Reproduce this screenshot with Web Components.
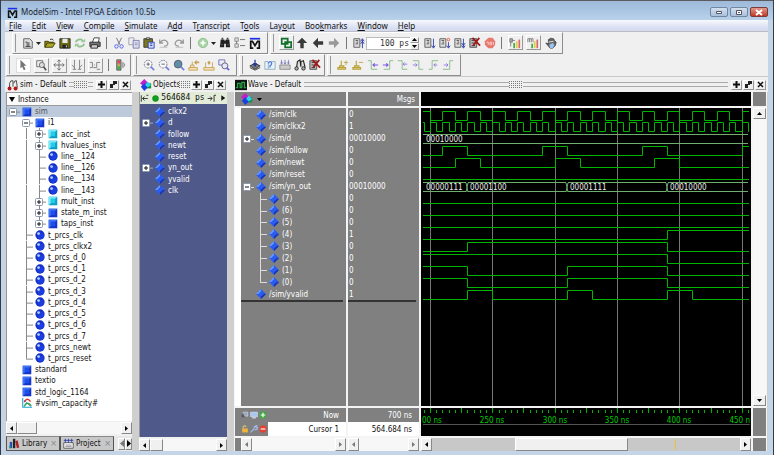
<!DOCTYPE html>
<html lang="en">
<head>
<meta charset="utf-8">
<title>ModelSim - Intel FPGA Edition 10.5b</title>
<style>
  html, body { margin: 0; height: 100%; }
  body { font: 8px/11px "DejaVu Sans Condensed", "DejaVu Sans", sans-serif; color: #111; background: #24303c; overflow: hidden; }
</style>
</head>
<body>
<app-window></app-window>

<script>
const ICONS = {
  logo: '<path d="M1 1h12v2H1z" fill="#1b2fe0"/><path d="M2 13V5h2l3 5 3-5h2v8M1 13h4M9 13h4" fill="none" stroke="#111" stroke-width="2"/>',
  doc: '<path d="M2 2h7l3 3v8H2z" fill="#ddd" stroke="#555"/><path d="M4 6h2v5M8 6v5M4 11h6" fill="none" stroke="#333"/>',
  open: '<path d="M1 12V5h4l1 1h5v2" fill="#8a8a18" stroke="#333300"/><path d="M1 12l3-5h9l-3 5z" fill="#b0a828" stroke="#333300"/><path d="M7 3q3-2 4 1" fill="none" stroke="#222"/>',
  save: '<path d="M1 2h12v11H1z" fill="#6e6e14" stroke="#222"/><path d="M4 2h6v5H4z" fill="#e8e8e8"/><path d="M4 9h6v4H4z" fill="#222"/><path d="M8 10h1v2H8z" fill="#fff"/>',
  refresh: '<path d="M2 6q2-4 7-3l1 2M12 8q-2 4-7 3l-1-2" fill="none" stroke="#8fc08f" stroke-width="2"/><path d="M8 6h5V2zM6 8H1v4z" fill="#9ccc9c"/>',
  print: '<path d="M4 6l2-5h6l-1 5" fill="#fff" stroke="#333"/><path d="M1 6h12v5H1z" fill="#777" stroke="#222"/><path d="M3 9h7v4H2z" fill="#ccc" stroke="#222"/>',
  cut: '<path d="M4 1l4 8M10 1L6 9" stroke="#667" fill="none"/><circle cx="4" cy="11" r="2" fill="none" stroke="#4455ee"/><circle cx="10" cy="11" r="2" fill="none" stroke="#4455ee"/>',
  copy: '<path d="M1 1h6v8H1z" fill="#eee" stroke="#99a"/><path d="M6 4h7v9H6z" fill="#dde" stroke="#77a"/><path d="M8 7h3M8 9h3" stroke="#88b"/>',
  paste: '<path d="M1 2h10v10H1z" fill="#7b7722" stroke="#333"/><path d="M4 1h4v2H4z" fill="#ddd" stroke="#333"/><path d="M6 6h7v7H6z" fill="#dde6ff" stroke="#2233aa"/><path d="M8 8h3M8 10h3" stroke="#2233aa"/>',
  undo: '<path d="M2 3v4h4M2 7q5-6 9-1 2 4-4 5" fill="none" stroke="#999" stroke-width="1.5"/><path d="M2 12h9" stroke="#bbb"/>',
  redo: '<path d="M12 3v4H8M12 7Q7 1 3 6q-2 4 4 5" fill="none" stroke="#999" stroke-width="1.5"/><path d="M3 12h9" stroke="#bbb"/>',
  plus: '<circle cx="7" cy="7" r="5.5" fill="#a9d3a4" stroke="#8fbf8c"/><path d="M7 4v6M4 7h6" stroke="#fff" stroke-width="2"/>',
  find: '<path d="M2 3h4l1 2 1-2h4l1 9H8V8H6v4H1z" fill="#222"/><path d="M3 1h2v2H3zM9 1h2v2H9z" fill="#444"/><path d="M3 9h1M10 9h1" stroke="#aaa"/>',
  list: '<path d="M1 1h4v4H1zM1 8h4v4H1z" fill="#ddd" stroke="#888"/><path d="M7 3h6M7 10h6M3 5v3" stroke="#666"/>',
  chip: '<path d="M2 2h7v6H2zM6 6h7v6H6z" fill="none" stroke="#13702a" stroke-width="2"/>',
  up: '<path d="M7 1l6 6H9v6H5V7H1z" fill="#3a3a3a"/>',
  left: '<path d="M1 7l6-6v4h6v4H7v4z" fill="#3a3a3a"/>',
  right: '<path d="M13 7L7 1v4H1v4h6v4z" fill="#999"/>',
  restart: '<path d="M1 2h7v10H1z" fill="#ddd" stroke="#555"/><path d="M3 4h3M4 6h2M3 8h3" stroke="#444"/><path d="M11 13V3M9 5l2-3 2 3M9 8l2-3 2 3" fill="none" stroke="#2233aa"/>',
  run: '<path d="M1 2h7v10H1z" fill="#ddd" stroke="#555"/><path d="M3 4h3M4 6h2M3 8h3" stroke="#444"/><path d="M11 2v10M9 10l2 3 2-3" fill="none" stroke="#2233aa"/>',
  runc: '<path d="M1 2h7v10H1z" fill="#ddd" stroke="#555"/><path d="M3 4h3M4 6h2M3 8h3" stroke="#444"/><path d="M11 6v6M9 10l2 3 2-3" fill="none" stroke="#2233aa"/><circle cx="11" cy="3" r="1.5" fill="none" stroke="#e44"/>',
  runall: '<path d="M1 2h7v10H1z" fill="#ddd" stroke="#555"/><path d="M3 4h3M4 6h2M3 8h3" stroke="#444"/><path d="M11 2v10M9 7l2 3 2-3M9 10l2 3 2-3" fill="none" stroke="#2233aa"/>',
  brk: '<path d="M1 2h8v10H1z" fill="#bbb" stroke="#444"/><path d="M3 4h4M3 7h4M3 10h4" stroke="#333"/><path d="M4 1l9 9M12 1L5 10" stroke="#a01515" stroke-width="2"/>',
  stop: '<path d="M5 1h5l3 4v4l-3 4H5L1 9V5z" fill="#e8786e"/><path d="M3 6h2v3M7 6v3h2V6zM11 6v3" fill="none" stroke="#fbd7d3"/>',
  perf: '<path d="M1 2h3v4H1zM4 4h3M2 6v5" fill="#aaa" stroke="#777"/><path d="M5 7h2v6H5z" fill="#4a4"/><path d="M8 5h2v8H8z" fill="#d9ce4a"/><path d="M11 3h2v10h-2z" fill="#d66"/>',
  mem: '<path d="M1 6V2h2v4M3 2h2v4M5 2h2v4" fill="none" stroke="#777"/><path d="M5 8h2v5H5z" fill="#4a4"/><path d="M8 5h2v8H8z" fill="#d9ce4a"/><path d="M11 3h2v10h-2z" fill="#d66"/>',
  hand: '<path d="M1 7l3 1V3l2-1 1-1 1 1 2 0 1 2 2 2-1 4-3 3H6z" fill="#666" stroke="#444"/><path d="M5 9l4-2 2 2-2 4H6z" fill="#9bc4f6"/><path d="M4 6l6-1" stroke="#eee"/>',
  pointer: '<path d="M4 1v10l2-2 2 4 2-1-2-4h3z" fill="#777"/>',
  zoombox: '<path d="M2 2h7v7H2z" fill="none" stroke="#666"/><circle cx="8" cy="7" r="3" fill="#ddd" stroke="#666"/><path d="M10 9l3 4" stroke="#555" stroke-width="2"/>',
  pan: '<path d="M7 1v12M1 7h12M5 3l2-2 2 2M5 11l2 2 2-2M3 5L1 7l2 2M11 5l2 2-2 2" fill="none" stroke="#666"/>',
  cursors: '<path d="M4 1v11M10 1v11M2 12h4M8 12h4M1 7l3 3M13 7l-3 3" fill="none" stroke="#777"/>',
  edit: '<path d="M1 4h3v6H1M5 10h4V4h4M6 7h1M9 12h4" fill="none" stroke="#777"/>',
  traffic: '<path d="M2 1h5v12H2z" fill="#999" stroke="#555"/><path d="M3 2h3v3H3z" fill="#e44"/><path d="M3 6h3v2H3z" fill="#ca4"/><path d="M3 9h3v3H3z" fill="#3b3"/><path d="M9 4q5 3 0 6z" fill="#ccc" stroke="#888"/>',
  zin: '<circle cx="6" cy="6" r="4.5" fill="#f6f9fc" stroke="#667" stroke-dasharray="2 1"/><path d="M4 6h4M6 4v4" stroke="#555"/><path d="M9 9l4 4" stroke="#7780dd" stroke-width="2"/>',
  zout: '<circle cx="6" cy="6" r="4.5" fill="#f6f9fc" stroke="#667" stroke-dasharray="2 1"/><path d="M4 6h4" stroke="#555"/><path d="M9 9l4 4" stroke="#7780dd" stroke-width="2"/>',
  zfull: '<circle cx="6" cy="6" r="4.5" fill="#5f8fa8" stroke="#556"/><path d="M9 9l4 4" stroke="#7780dd" stroke-width="2"/>',
  zcur: '<path d="M1 10h10v3H1zM3 10V7h4v3M5 7V3" fill="#f0e2bb" stroke="#c9a04e"/><path d="M7 4l3-3v2h3v2h-3v2z" fill="#c9a04e"/>',
  zrange: '<path d="M1 10h12v3H1zM3 10V4M11 10V4" fill="#f0e2bb" stroke="#c9a04e"/><path d="M5 4l2-2 2 2-2 3z" fill="#c9a04e"/>',
  zother: '<path d="M1 1h7v6H1z" fill="#eef" stroke="#66a"/><circle cx="8" cy="8" r="3.5" fill="#e5e9ff" stroke="#556"/><path d="M10 10l3 3" stroke="#66d" stroke-width="2"/>',
  compile: '<path d="M1 8l6-3 6 3-6 4z" fill="#777" stroke="#333"/><path d="M1 10l6 3 6-3" fill="none" stroke="#333"/><path d="M7 1v6M5 5l2 3 2-3" fill="none" stroke="#223a99" stroke-width="1.5"/>',
  outdate: '<path d="M1 3h4v9H1zM9 3h4v9H5" fill="#eaf2fa" stroke="#8ab"/><path d="M5 5q3-4 4 0 0 2-2 3v2" fill="none" stroke="#47d" stroke-width="1.5"/>',
  compileall: '<path d="M1 7h12v5H1z" fill="#ccc" stroke="#888"/><path d="M3 1v5M7 1v5M11 1v5M2 4l1 2 1-2M6 4l1 2 1-2M10 4l1 2 1-2" fill="none" stroke="#77b"/>',
  sim: '<path d="M3 10L4 3l3-2 1 8M8 9L8 3l3-1 2 8" fill="#ddd" stroke="#222" stroke-width="1.3"/><circle cx="3" cy="11" r="2" fill="#aaa" stroke="#222"/><circle cx="11" cy="11" r="2" fill="#aaa" stroke="#222"/>',
  simred: '<path d="M3 10V5q1-4 4-3v7M8 5q1-4 3-3l1 8" fill="#eee" stroke="#333"/><circle cx="3" cy="11" r="2.3" fill="#b01818"/><circle cx="10" cy="11" r="2.3" fill="#b01818"/>',
  curadd: '<path d="M1 10h9v2H1zM3 10V8h5v2M5 8V2" fill="#e9dc9a" stroke="#bba23c" stroke-width="1.3"/><path d="M8 4h5M10.5 2v5" stroke="#bba23c"/>',
  curdel: '<path d="M1 10h9v2H1zM3 10V8h5v2M5 8V2" fill="#e9dc9a" stroke="#bba23c" stroke-width="1.3"/><path d="M8 4h5" stroke="#bba23c"/>',
  eprev: '<path d="M1 2h4v10h7" fill="none" stroke="#7fb87f"/><path d="M7 7h6M9 5L7 7l2 2" fill="none" stroke="#7a55dd" stroke-width="1.3"/>',
  enext: '<path d="M2 12h7V2h4" fill="none" stroke="#7fb87f"/><path d="M1 7h6M5 5l2 2-2 2" fill="none" stroke="#7a55dd" stroke-width="1.3"/>',
  fprev: '<path d="M1 2h5v10h6" fill="none" stroke="#7fb87f"/><path d="M7 6h5M9 4L7 6l2 2" fill="none" stroke="#8a70dd"/>',
  fnext: '<path d="M1 2h7v10h5" fill="none" stroke="#7fb87f"/><path d="M1 7h5M4 5l2 2-2 2" fill="none" stroke="#8a70dd"/>',
  rprev: '<path d="M2 12h4V2h7" fill="none" stroke="#7fb87f"/><path d="M8 7h4M10 5L8 7l2 2" fill="none" stroke="#8a70dd"/>',
  rnext: '<path d="M1 12h8V2h4" fill="none" stroke="#7fb87f"/><path d="M2 7h5M5 5l2 2-2 2" fill="none" stroke="#8a70dd"/>',
  objects: '<path d="M5 0l4 4-4 5-5-4z" fill="#c020c8"/><path d="M8 5h5v6H8z" fill="#12903a"/><path d="M5 5l5 4-5 5-4-5z" fill="#1b3fe0"/><path d="M9 3l4 4-4 3-3-3z" fill="#27d7e6"/>',
  wave: '<path d="M0 1h14v12H0z" fill="#111"/><path d="M1 10h2V5h3v5h2V4h3v6h2" fill="none" stroke="#27a545" stroke-width="1.5"/>',
  square: '<path d="M1 1h12v12H1z" fill="#1536c8"/><path d="M1 1h12l-3 3H4v6l-3 3z" fill="#3f74f5"/><path d="M4 4h6v6H4z" fill="#1e4df0"/>',
  cyan: '<path d="M1 1h12v12H1z" fill="#0f9fc6"/><path d="M1 1h12l-3 3H4v6l-3 3z" fill="#7aeaf8"/><path d="M4 4h6v6H4z" fill="#22cdea"/>',
  ball: '<circle cx="7" cy="7" r="6.5" fill="#1230c4"/><circle cx="8" cy="8" r="4.5" fill="#1a3ee0"/><circle cx="5" cy="5" r="2" fill="#b9ccff"/>',
  diamond: '<path d="M7 0l7 7-7 7-7-7z" fill="#2a5cf0"/><path d="M7 0v3L3 7H0z" fill="#6a9cff"/><path d="M14 7l-7 7v-3l4-4z" fill="#1a32a8"/>',
  cap: '<path d="M1 0v13h13" fill="none" stroke="#18a4d8" stroke-width="1.5"/><path d="M3 6q4-8 9-1" fill="none" stroke="#e03a2a" stroke-width="2"/><path d="M3 3l9 9" stroke="#3a62e0"/><path d="M3 12q4-9 10-1" fill="none" stroke="#27a545" stroke-width="2"/>',
  library: '<path d="M1 5h3v8H1z" fill="#2a4ab8"/><path d="M5 1h3v12H5z" fill="#222"/><path d="M8 4l3-1 2 9-3 1z" fill="#b02222"/><path d="M0 10h2v3H0z" fill="#2a8"/>',
  project: '<path d="M1 6h12v7H1z" fill="#fff" stroke="#444"/><path d="M3 1v5M7 1v5M11 1v5M1 3h12" stroke="#2233aa"/><path d="M3 9h8M3 11h8" stroke="#777"/>',
  goleft: '<path d="M2 2v10M4 7h8M7 4L4 7l3 3M10 2h3" fill="none" stroke="#333" stroke-width="1.5"/>',
  goright: '<path d="M1 7h7M5 4l3 3-3 3M11 12V2h3" fill="none" stroke="#333" stroke-width="1.5"/>',
  play: '<path d="M4 2l7 5-7 5z" fill="#111"/>',
  dot: '<circle cx="7" cy="7" r="6" fill="#0fa01c" stroke="#0a6e12"/>',
  car: '<path d="M1 6h8v5H1z" fill="#556"/><path d="M3 2h9v7H6" fill="#9ab" stroke="#dde"/>',
  screen: '<path d="M1 2h12v8H1z" fill="#a9c6f2" stroke="#dfe9f8"/><path d="M4 12h6" stroke="#dfe9f8" stroke-width="2"/>',
  add: '<circle cx="7" cy="7" r="6.5" fill="#45a845"/><path d="M7 3v8M3 7h8" stroke="#fff" stroke-width="2"/>',
  lock: '<path d="M4 6V3q3-3 5 0" fill="none" stroke="#d6c17a" stroke-width="2"/><path d="M2 6h10v7H2z" fill="#f0b437"/>',
  wrench: '<path d="M1 13l6-6M7 7q-1-5 5-6l-2 3 2 1 2-1q0 5-6 4" fill="none" stroke="#9dbbe8" stroke-width="2"/>',
  remove: '<circle cx="7" cy="7" r="6.5" fill="#dd4536"/><path d="M3 7h8" stroke="#fff" stroke-width="2"/>'
};
const icon = (name, size = 13) => `<svg class="ico" width="${size}" height="${size}" viewBox="0 0 14 14" aria-hidden="true">${ICONS[name]}</svg>`;

const define = (tag, css, render) => customElements.define(tag, class extends HTMLElement {
  connectedCallback() {
    if (this.shadowRoot) return;
    const root = this.attachShadow({ mode: 'open' });
    root.innerHTML = `<style>*{box-sizing:border-box}:host{box-sizing:border-box}button{font:inherit;color:inherit;margin:0;padding:0;border:0;background:none;display:flex;align-items:center;justify-content:center}svg{display:block;flex:none}${css}</style>` + render(this);
  }
});
const attr = (el, n, d = '') => el.getAttribute(n) ?? d;

define('title-bar', `
  :host{display:flex;align-items:center;gap:3px;height:20px;padding:3px 1px 0 2px;background:linear-gradient(#9fbad8,#a9c4e2 45%,#b9d1ea);font:8px/12px "Noto Sans",sans-serif;color:#1a2430;border-top:1px solid #5d5a60}
  h1{font:inherit;margin:0;flex:1;white-space:nowrap}
  .wb{display:flex;gap:2px}
  .wb button{width:18px;height:10px;border:1px solid #7186a0;border-radius:2px;background:linear-gradient(#d3e0ef,#a9c0da)}
  .wb button:last-child{background:linear-gradient(#e09a8c,#c03a26);border-color:#7c3a38}`,
  () => `${icon('logo', 11)}<h1>ModelSim - Intel FPGA Edition 10.5b</h1><div class="wb">
  <button aria-label="Minimize"><svg width="8" height="6"><path d="M1.5 2.5h5v2h-5z" fill="#fff" stroke="#556"/></svg></button>
  <button aria-label="Maximize"><svg width="8" height="7"><path d="M1.5 1.5h5v4h-5z" fill="#fff" stroke="#556"/><path d="M3 3h2v1H3z" fill="#556"/></svg></button>
  <button aria-label="Close"><svg width="8" height="7"><path d="M1 1l6 5M7 1L1 6" stroke="#fff" stroke-width="2"/></svg></button></div>`);

define('menu-bar', `
  :host{display:block;background:linear-gradient(#f8f9fd,#dde3f3 60%,#d3daee);border-bottom:1px solid #bcbcc4;font:8px/12px "Noto Sans","DejaVu Sans",sans-serif}
  nav{display:flex;gap:10px;padding:0 4px;height:11px}
  a{color:inherit;text-decoration:none;white-space:nowrap}`,
  () => `<nav>${['_File', '_Edit', '_View', '_Compile', '_Simulate', 'A_dd', 'T_ranscript', 'T_ools', 'Lay_out', 'Boo_kmarks', '_Window', '_Help']
    .map(t => `<a href="#">${t.replace(/_(.)/, '<u>$1</u>')}</a>`).join('')}</nav>`);

define('tool-bar', `
  :host{display:flex;align-items:center;height:22px;padding:0 5px 0 7px;border-right:1px solid #8d8d8d;border-bottom:1px solid #8d8d8d;border-left:1px solid #fff;border-top:1px solid #fff;background:linear-gradient(#9a9a9a,#9a9a9a) 2px 1px/1px 18px no-repeat,#f0f0f0}`,
  () => '<slot></slot>');

define('tool-button', `
  :host{display:block;flex:none;width:var(--w,15px)}
  button{width:100%;height:16px}
  :host([raised]) button{width:15px;height:15px;margin:auto;border:1px solid;border-color:#fff #999 #999 #fff}
  :host([pressed]) button{width:15px;height:15px;margin:auto;background:#fff;border:1px solid #ddd}`,
  el => `<button aria-label="${attr(el, 'icon')}">${icon(attr(el, 'icon'), 12)}</button>`);

define('tool-sep', `:host{display:block;flex:none;width:9px;height:12px;background:linear-gradient(#777,#777) 4px 0/1px 100% no-repeat}`, () => '');
define('tool-caret', `:host{display:block;flex:none;width:7px}button{width:7px;height:14px}`,
  () => '<button aria-label="More"><svg width="5" height="3"><path d="M0 0h5L2.5 3z" fill="#222"/></svg></button>');

define('time-field', `
  :host{display:flex;flex:none;width:56px;height:13px;padding-right:3px}
  input{width:42px;min-width:0;flex:1;border:1px solid #bbb;border-right:0;background:#fff;font:8px/11px "DejaVu Sans Mono",monospace;color:#333;text-align:right;padding:0 1px}
  .sp{display:flex;flex-direction:column;width:9px}
  .sp button{flex:1;background:#eee;border:1px solid;border-color:#fff #999 #999 #fff}`,
  () => `<input aria-label="Run length" value="100 ps"><span class="sp"><button aria-label="Increase"><svg width="5" height="3"><path d="M0 3h5L2.5 0z"/></svg></button><button aria-label="Decrease"><svg width="5" height="3"><path d="M0 0h5L2.5 3z"/></svg></button></span>`);

define('dock-pane', `
  :host{display:flex;flex-direction:column;min-width:0;min-height:0;background:#f0f0f0}
  header{display:flex;align-items:center;height:15px;padding:0 1px;flex:none}
  h2{font:inherit;margin:0 3px 0 1px;white-space:nowrap}
  .grip{flex:1;height:5px;border:solid #aaa;border-width:1px 0;display:flex;justify-content:center;margin-right:3px;min-width:0}
  .dots{flex:none;width:var(--dots,14px);height:7px;margin-top:-2px;background:repeating-linear-gradient(90deg,transparent 0 1px,#f0f0f0 1px 2px),repeating-linear-gradient(#777 0 1px,#f0f0f0 1px 2px)}
  .b{display:flex;gap:1px}
  .b button{width:11px;height:10px;border:1px solid;border-color:#fff #999 #999 #fff}
  section{flex:1;display:flex;flex-direction:column;min-height:0}`,
  el => `<header>${icon(attr(el, 'icon'), 12)}<h2>${attr(el, 'label')}</h2><span class="grip"><span class="dots"></span></span>
  <span class="b"><button aria-label="Add"><svg width="7" height="7"><path d="M3.5 0v7M0 3.5h7" stroke="#111" stroke-width="2"/></svg></button>
  <button aria-label="Undock"><svg width="7" height="7"><path d="M0 3h3v4H0zM3 0h4v3H5v1H3z" fill="#222"/></svg></button>
  <button aria-label="Close"><svg width="7" height="7"><path d="M1 1l5 5M6 1L1 6" stroke="#111" stroke-width="1.5"/></svg></button></span></header>
  <section><slot></slot></section>`);

define('scroll-bar', `
  :host{display:flex;flex:none;height:12px;background:var(--track,#f7f7f7)}
  :host([vertical]){flex-direction:column;width:11px;height:auto}
  button{flex:none;width:11px;height:100%;background:#f0f0f0;border:1px solid;border-color:#fff #888 #888 #fff}
  :host([vertical]) button{width:100%;height:11px}
  .track{flex:1;position:relative;min-width:0}
  .thumb{height:100%;margin-left:var(--from,0%);width:var(--size,20px);background:#f0f0f0;border:1px solid;border-color:#fff #888 #888 #fff}
  :host([nothumb]) .thumb{display:none}
  path{fill:var(--arrow,#000)}
  .mark{position:absolute;left:var(--mark);top:1px;bottom:1px;width:1px;background:#e8c33a}`,
  el => {
    const v = el.hasAttribute('vertical');
    const p = v ? ['M0 4h5L2.5 1z', 'M0 1h5L2.5 4z'] : ['M4 0v5L1 2.5z', 'M1 0v5l3-2.5z'];
    return `<button aria-label="Back"><svg width="5" height="5"><path d="${p[0]}"/></svg></button><div class="track"><div class="thumb"></div>${el.hasAttribute('mark') ? '<div class="mark"></div>' : ''}</div><button aria-label="Forward"><svg width="5" height="5"><path d="${p[1]}"/></svg></button>`;
  });

// guides: one letter per 13px cell. space: blank, v: vertical line, t: tee, l: elbow,
// + and -: toggle with a line to its icon, p and q: "+" toggle on a tee or an elbow
define('tree-row', `
  :host{display:flex;align-items:center;min-height:0;white-space:nowrap;overflow:hidden}
  :host([selected]){background:#bccadb;color:#555}
  .cell{width:13px;height:100%}
  .slot{flex:none;width:13px;height:100%;display:flex;align-items:center;justify-content:center}
  span{padding-left:2px;line-height:11px}`,
  el => {
    const c = 'var(--line,#888)';
    const cells = [...attr(el, 'guides')].map(g => {
      let s = '';
      if ('vtp'.includes(g)) s += `<rect x="6" y="0" width="1" height="100%" fill="${c}"/>`;
      if ('lq'.includes(g)) s += `<rect x="6" y="0" width="1" height="50%" fill="${c}"/>`;
      if ('tlpq+-'.includes(g)) s += `<rect x="6" y="50%" width="7" height="1" fill="${c}"/>`;
      if ('pq+-'.includes(g)) s += `<svg y="1" width="13" height="10"><rect x="2.5" y="1.5" width="7" height="7" rx="1" fill="#fff" stroke="#8899b0"/><path d="M4 5h4${'pq+'.includes(g) ? 'M6 3v4' : ''}" stroke="#111"/></svg>`;
      return `<svg class="cell">${s}</svg>`;
    }).join('');
    return `${cells}<div class="slot">${icon(attr(el, 'icon'), 10)}</div><span>${attr(el, 'label')}</span>`;
  });

const row = ([guides, ic, label, sel]) => `<tree-row guides="${guides}" icon="${ic}" label="${label}"${sel ? ' selected' : ''}></tree-row>`;

define('instance-tree', `
  :host{display:flex;flex-direction:column;flex:1;min-height:0}
  .head{display:flex;align-items:center;gap:3px;height:14px;padding-left:2px;background:#fafafa;border:1px solid #999;border-width:1px 0 1px 1px}
  .body{flex:1;background:#fff;border-left:1px solid #999;min-height:0}
  .rows{display:grid;grid-auto-rows:1fr;height:303px}
  .tabs{display:flex;height:15px;align-items:center;background:#e8e8e8}
  .tab{display:flex;align-items:center;gap:2px;height:15px;width:54px;flex:none;padding:0 2px;background:#c8c8c8;border:1px solid #555;border-top-color:#888;white-space:nowrap}
  .tab b{font-weight:normal;color:#888;margin-left:auto;font-size:9px}
  .ar{display:flex;margin-left:auto}
  .ar button{width:7px;height:12px;border:1px solid;border-color:#fff #888 #888 #fff}
  scroll-bar{--size:20px;margin:1px 0 2px}`,
  () => `<div class="head"><svg width="6" height="5"><path d="M0 0h6L3 5z"/></svg>Instance</div><div class="body"><div class="rows">${[
    ['-', 'square', 'sim', 1], [' -', 'square', 'i1'],
    [' vp', 'cyan', 'acc_inst'], [' vp', 'cyan', 'hvalues_inst'],
    ...['124', '126', '134', '143'].map(n => [' vt', 'ball', 'line__' + n]),
    [' vp', 'cyan', 'mult_inst'], [' vp', 'square', 'state_m_inst'], [' vq', 'square', 'taps_inst'],
    ...['clk', 'clkx2', 'd_0', 'd_1', 'd_2', 'd_3', 'd_4', 'd_5', 'd_6', 'd_7', 'newt'].map(n => [' t', 'ball', 't_prcs_' + n]),
    [' l', 'ball', 't_prcs_reset'],
    [' ', 'square', 'standard'], [' ', 'square', 'textio'], [' ', 'square', 'std_logic_1164'], [' ', 'cap', '#vsim_capacity#']
  ].map(row).join('')}</div></div><scroll-bar></scroll-bar>
  <div class="tabs"><button class="tab">${icon('library', 11)}Library<b>×</b></button><button class="tab">${icon('project', 11)}Project<b>×</b></button>
  <span class="ar"><button aria-label="Previous tab"><svg width="4" height="7"><path d="M4 0v7L0 3.5z" fill="#777"/></svg></button><button aria-label="Next tab"><svg width="4" height="7"><path d="M0 0v7l4-3.5z"/></svg></button></span></div>`);

define('object-list', `
  :host{display:flex;flex-direction:column;flex:1;min-height:0}
  .time{display:flex;align-items:center;justify-content:space-between;height:12px;background:#e3ecd8;font:8px/10px "DejaVu Sans Mono",monospace;white-space:nowrap;border-left:1px solid #999}
  .body{flex:1;background:#505a8a;color:#fff;--line:#aab;border-left:1px solid #999}
  .rows{display:grid;grid-auto-rows:1fr;height:90px;padding-top:2px;box-sizing:content-box}
  scroll-bar{--size:13px;margin:2px 0 0}`,
  () => `<div class="time">${icon('goleft', 9)}${icon('dot', 7)}<span>564684 ps</span>${icon('goright', 9)}${icon('play', 8)}</div><div class="body"><div class="rows">${[
    [' ', 'clkx2'], ['+', 'd'], [' ', 'follow'], [' ', 'newt'], [' ', 'reset'], ['+', 'yn_out'], [' ', 'yvalid'], [' ', 'clk']
  ].map(([g, l]) => row([g, 'diamond', l])).join('')}</div></div><scroll-bar></scroll-bar>`);

// Time in ns to x in the plot.
const T0 = 192.8, SCALE = 1.2468, START = 194.5, END = 455.5;
const X = t => Math.round((t - T0) * SCALE);
const SIGNALS = [
  { clock: 10, from: 200 }, { clock: 5, from: 195 },
  { bus: [[0, '00010000']] },
  { v: 0, t: [210, 230, 290, 310, 370, 390, 450] }, { v: 0, t: [220, 240, 300, 320, 380, 400] }, { v: 0, t: [] },
  { bus: [[0, '00000111'], [230, '00001100'], [310, '00001111'], [390, '00010000']] },
  { v: 0, t: [] }, { v: 0, t: [] }, { v: 0, t: [] },
  { v: 0, t: [390] }, { v: 0, t: [230, 390] }, { v: 1, t: [390] }, { v: 1, t: [230, 310, 390] }, { v: 1, t: [230, 310, 390] },
  { v: 0, t: [230, 250, 310, 330, 390, 410] }
];
define('wave-plot', `:host{display:block;background:#000;min-width:0;overflow:hidden}svg{width:100%;height:100%}text{font:8px "DejaVu Sans Condensed","DejaVu Sans",sans-serif;fill:#eee}`,
  () => {
    let s = '';
    for (let t = 200; t <= 450; t += 50) s += `<rect x="${X(t)}" width="1" height="100%" fill="#777"/>`;
    SIGNALS.forEach((g, i) => {
      const c = Math.round(8 + i * 191 / 16 - .5), hi = c - 4, lo = c + 5;
      if (g.bus) {
        g.bus.forEach(([t, label], k) => {
          const a = t ? X(t) : X(START), b = g.bus[k + 1] ? X(g.bus[k + 1][0]) : X(END);
          s += `<path d="M${a + (t ? 1 : 0)} ${hi - .5}H${b - 1}M${a + (t ? 1 : 0)} ${lo - .5}H${b - 1}${t ? `M${a - 1} ${hi}l1 4v1l-1 4M${a + 1} ${hi}l-1 4v1l1 4` : ''}" stroke="#6fae6f" fill="none"/><text x="${a + 3}" y="${c + 3}">${label}</text>`;
        });
        return;
      }
      let v = g.v, ts = g.t;
      if (g.clock) {
        v = 1; ts = [];
        for (let t = g.from; t < END; t += g.clock) ts.push(t);
      }
      let d = `M${X(START)} ${(v ? hi : lo) - .5}`;
      ts.forEach(t => { v = 1 - v; d += `H${X(t) + .5}V${(v ? hi : lo) - .5}`; });
      s += `<path d="${d}H${X(END)}" stroke="#00b400" fill="none"/>`;
    });
    return `<svg role="img" aria-label="Waveforms">${s}</svg>`;
  });

define('time-ruler', `:host{display:block;background:#000;min-width:0;overflow:hidden}svg{width:100%;height:100%}text{font:8px "DejaVu Sans Condensed","DejaVu Sans",sans-serif;fill:#00cc00;text-anchor:middle}.first{text-anchor:start}.last{text-anchor:end}`,
  () => {
    let s = '';
    for (let t = 195; t <= 455; t += 5) s += `<rect x="${X(t)}" y="${t % 25 ? 2 : 0}" width="1" height="${t % 25 ? 3 : 5}" fill="#00b400"/>`;
    for (let t = 250; t <= 400; t += 50) s += `<text x="${X(t)}" y="15">${t} ns</text>`;
    s += `<text class="first" x="1" y="15">00 ns</text><text class="last" x="${X(END) + 1}" y="15">450 n</text>`;
    return `<svg role="img" aria-label="Time axis">${s}<rect x="2" y="16" width="99%" height="1" fill="#555"/></svg>`;
  });

define('wave-view', `
  :host{display:grid;flex:1;min-height:0;grid-template-columns:111px 71px 1fr 13px;grid-template-rows:14px 1fr 28px 13px;gap:2px;background:#f4f4f4;padding:0 1px}
  .g{background:#808080;color:#fff;min-width:0}
  .top{display:flex;align-items:center;padding:0 4px 0 6px;gap:4px}
  .msgs{justify-content:flex-end}
  .names{border-left:6px solid #fff;--line:#ddd}
  .rows{display:grid;grid-auto-rows:1fr;height:191px;padding-top:1px;box-sizing:content-box;border-bottom:2px solid #333;margin-right:3px}
  .vals .rows{padding-left:1px}
  .rows div{display:flex;align-items:center}
  .black{background:#000}
  .foot{display:flex;flex-direction:column}
  .foot>div{flex:1;display:flex;align-items:center;padding-right:7px}
  .foot .icons{display:flex;gap:1px;padding-left:6px;width:33px;flex:none}
  .foot .txt{margin-left:auto}
  .foot .white{flex:1;align-self:stretch;display:flex;align-items:center;justify-content:flex-end;background:#fff;color:#111;margin-right:-7px;padding-right:7px}
  .lead{border-left:6px solid #808080}
  scroll-bar{height:13px;--arrow:#777}
  scroll-bar.v{height:auto;width:13px;--arrow:#000}
  scroll-bar.main{--arrow:#000;--track:#c8c8c8;--from:27%;--size:113px;--mark:79%}`,
  () => {
    const names = [[' ', '/sim/clk', 0], [' ', '/sim/clkx2', 1], ['+', '/sim/d', '00010000'], [' ', '/sim/follow', 0], [' ', '/sim/newt', 0], [' ', '/sim/reset', 0], ['-', '/sim/yn_out', '00010000'],
      [' t', '(7)', 0], [' t', '(6)', 0], [' t', '(5)', 0], [' t', '(4)', 1], [' t', '(3)', 0], [' t', '(2)', 0], [' t', '(1)', 0], [' l', '(0)', 0], [' ', '/sim/yvalid', 1]];
    return `
    <div class="g top">${icon('objects', 12)}<svg width="5" height="3"><path d="M0 0h5L2.5 3z"/></svg></div><div class="g top msgs">Msgs</div><div class="black"></div><div class="g"></div>
    <div class="g names"><div class="rows">${names.map(([g, l]) => row([g, 'diamond', l])).join('')}</div></div>
    <div class="g vals"><div class="rows">${names.map(n => `<div>${n[2]}</div>`).join('')}</div></div>
    <wave-plot></wave-plot><scroll-bar vertical nothumb class="v"></scroll-bar>
    <div class="g foot"><div><span class="icons">${icon('car', 8)}${icon('screen', 8)}${icon('add', 8)}</span><span class="txt">Now</span></div><div><span class="icons">${icon('lock', 8)}${icon('wrench', 8)}${icon('remove', 8)}</span><span class="white">Cursor 1</span></div></div>
    <div class="g foot"><div><span class="txt">700 ns</span></div><div><span class="white">564.684 ns</span></div></div>
    <time-ruler></time-ruler><div class="g"></div>
    <scroll-bar class="lead" nothumb></scroll-bar><scroll-bar nothumb></scroll-bar><scroll-bar class="main" mark></scroll-bar><div class="g"></div>`;
  });

const B = (list, extra = '') => list.split(' ').map(n => n === '|' ? '<tool-sep></tool-sep>' : n === 'v' ? '<tool-caret></tool-caret>' : `<tool-button icon="${n}" ${extra}></tool-button>`).join('');
define('app-window', `
  :host{display:flex;flex-direction:column;height:100%;min-height:100vh}
  .frame{flex:1;display:flex;flex-direction:column;min-height:0;background:#c5d5e8;border:solid #333c48;border-width:0 1px;padding:0 5px 4px 4px}
  title-bar{margin:0 -5px 0 -4px;padding-left:6px;padding-right:5px}
  .client{flex:1;display:flex;flex-direction:column;background:#f0f0f0;min-height:0}
  .bar{display:flex;gap:2px;height:22px;flex:none}
  .one{padding-left:7px}
  .two{height:22px;box-sizing:content-box;border-bottom:1px solid #c8c8c8;padding-left:1px}
  .group{display:flex;--w:18px}
  .tight{padding-right:2px}
  .panes{flex:1;display:grid;grid-template-columns:126px 88px 1fr;gap:7px;padding:0 1px;background:linear-gradient(#f0f0f0,#f0f0f0) 0 0/100% 15px no-repeat,#cfcfcf;min-height:0}`,
  () => `<div class="frame"><title-bar></title-bar><div class="client"><menu-bar></menu-bar>
  <div class="bar one"><tool-bar>${B('doc v open save refresh print | cut copy paste undo redo | plus v find list logo')}</tool-bar>
  <tool-bar class="tight"><span class="group" style="--w:16px">${B('chip', 'raised')}${B('up left right')}</span>${B('| restart')}<time-field></time-field>${B('run runc runall brk stop |')}<span class="group">${B('perf mem', 'raised')}${B('hand')}</span></tool-bar></div>
  <div class="bar two"><tool-bar class="tight"><span class="group">${B('pointer', 'pressed')}${B('zoombox pan cursors edit', 'raised')}</span>${B('| traffic')}</tool-bar>
  <tool-bar>${B('zin zout zfull zcur zrange zother')}</tool-bar><tool-bar class="tight">${B('compile outdate compileall sim brk')}</tool-bar>
  <tool-bar>${B('curadd curdel eprev enext fprev fnext rprev rnext')}</tool-bar></div>
  <div class="panes"><dock-pane icon="simred" label="sim - Default"><instance-tree></instance-tree></dock-pane>
  <dock-pane icon="objects" label="Objects"><object-list></object-list></dock-pane>
  <dock-pane icon="wave" label="Wave - Default"><wave-view></wave-view></dock-pane></div></div></div>`);
</script>
</body>
</html>
